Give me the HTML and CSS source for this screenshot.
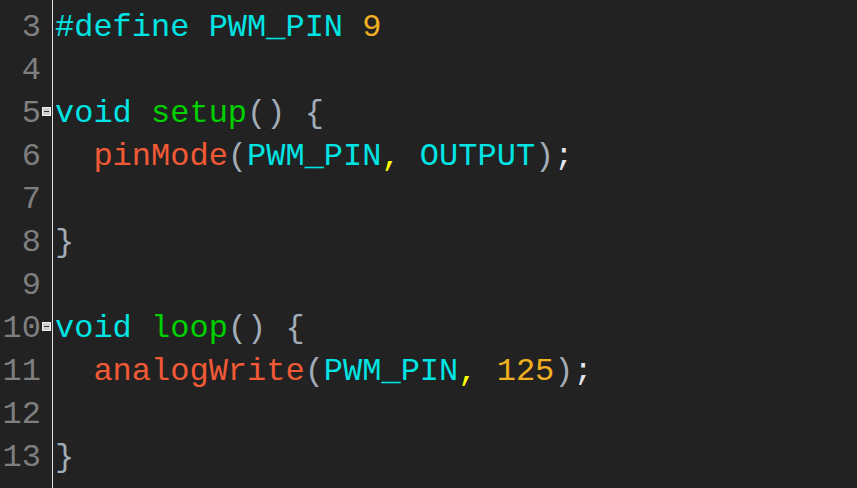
FILE: index.html
```html
<!DOCTYPE html>
<html>
<head>
<meta charset="utf-8">
<link rel="stylesheet" href="styles.css">
</head>
<body>
<div class="editor">
  <div class="gutter">
    <div class="num">3</div>
    <div class="num">4</div>
    <div class="num">5</div>
    <div class="num">6</div>
    <div class="num">7</div>
    <div class="num">8</div>
    <div class="num">9</div>
    <div class="num">10</div>
    <div class="num">11</div>
    <div class="num">12</div>
    <div class="num">13</div>
  </div>
  <div class="folds">
    <div class="fold"></div>
    <div class="fold"></div>
    <div class="fold"><span class="box"></span></div>
    <div class="fold"></div>
    <div class="fold"></div>
    <div class="fold"></div>
    <div class="fold"></div>
    <div class="fold"><span class="box"></span></div>
    <div class="fold"></div>
    <div class="fold"></div>
    <div class="fold"></div>
  </div>
  <div class="code">
    <div class="line"><span class="kw">#define PWM_PIN</span> <span class="nm">9</span></div>
    <div class="line"></div>
    <div class="line"><span class="kw">void</span> <span class="fn">setup</span><span class="p">()</span> <span class="p">{</span></div>
    <div class="line">  <span class="call">pinMode</span><span class="p">(</span><span class="kw">PWM_PIN</span><span class="cm">,</span> <span class="kw">OUTPUT</span><span class="p">)</span><span class="sc">;</span></div>
    <div class="line"></div>
    <div class="line"><span class="p">}</span></div>
    <div class="line"></div>
    <div class="line"><span class="kw">void</span> <span class="fn">loop</span><span class="p">()</span> <span class="p">{</span></div>
    <div class="line">  <span class="call">analogWrite</span><span class="p">(</span><span class="kw">PWM_PIN</span><span class="cm">,</span> <span class="nm">125</span><span class="p">)</span><span class="sc">;</span></div>
    <div class="line"></div>
    <div class="line"><span class="p">}</span></div>
  </div>
</div>
</body>
</html>
```
FILE: styles.css
```css
html, body {
  margin: 0;
  padding: 0;
  background: #222222;
  height: 100%;
  overflow: hidden;
}
.editor {
  display: flex;
  height: 488px;
  font-family: "Courier New", "Nimbus Mono PS", "FreeMono", "Liberation Mono", monospace;
  font-size: 32px;
  line-height: 43px;
  padding-top: 6px;
  box-sizing: border-box;
}
.gutter {
  width: 41px;
  text-align: right;
  color: #7f7f7f;
}
.num, .fold, .line {
  height: 43px;
}
.folds {
  width: 11px;
}
.fold {
  position: relative;
}
.box {
  position: absolute;
  left: 1px;
  top: 15px;
  width: 9px;
  height: 9px;
  box-sizing: border-box;
  border: 1px solid #f0f0f0;
  background: #cfcfcf;
}
.box::after {
  content: "";
  position: absolute;
  left: 1px;
  top: 3px;
  width: 5px;
  height: 1px;
  background: #3a3a3a;
}
.code {
  flex: 1;
  border-left: 1px solid #e4e4e4;
  margin-top: -6px;
  padding-top: 6px;
  padding-left: 2px;
  color: #d0d8e0;
}
.line {
  white-space: pre;
}
.kw { color: #00e4e4; }
.fn { color: #00d000; }
.call { color: #f25a36; }
.p { color: #a2adb8; }
.nm { color: #f0b020; }
.cm { color: #ffff00; }
.sc { color: #e0e6ec; }
```
